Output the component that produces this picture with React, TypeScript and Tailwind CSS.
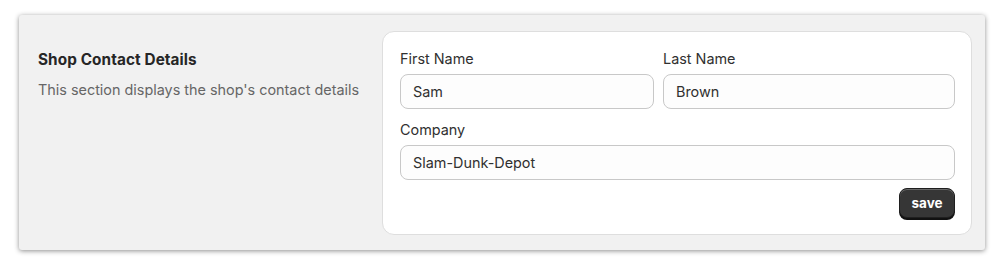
import { useState } from "react";

export default function App() {
  const [firstName, setFirstName] = useState("Sam");
  const [lastName, setLastName] = useState("Brown");
  const [company, setCompany] = useState("Slam-Dunk-Depot");

  return (
    <div className="w-[1000px] h-[266px] bg-white pt-[15px] pl-[19px] font-['Inter',sans-serif]">
      <section className="w-[966px] h-[235px] bg-[#f1f1f1] rounded-[3px] shadow-[0_1px_5px_rgba(0,0,0,0.45)] flex pt-[16px] pr-[13px] pb-[15px]">
        {/* left: section description */}
        <div className="w-[363px] shrink-0 pl-[19px] pt-[19px]">
          <h2 className="text-[15.3px] leading-[20px] font-bold tracking-[0.1px] text-[#262626]">
            Shop Contact Details
          </h2>
          <p className="mt-[10px] text-[14.4px] leading-[20px] text-[#666666]">
            This section displays the shop's contact details
          </p>
        </div>

        {/* right: form card */}
        <div className="flex-1 bg-white rounded-[12px] border border-[#dedede] pl-[17px] pr-[16px] pt-[18px]">
          <div className="flex gap-[9px]">
            <Field label="First Name" value={firstName} onChange={setFirstName} className="w-[254px] shrink-0" />
            <Field label="Last Name" value={lastName} onChange={setLastName} className="flex-1" />
          </div>
          <div className="mt-[12px] flex">
            <Field label="Company" value={company} onChange={setCompany} className="flex-1" />
          </div>
          <div className="flex justify-end mt-[8px]">
            <button className="h-[30px] w-[56px] rounded-[8px] bg-[#363636] border border-[#1f1f1f] shadow-[inset_0_1px_0_rgba(255,255,255,0.25),0_2px_0_#111] text-white text-[13.5px] font-bold">
              save
            </button>
          </div>
        </div>
      </section>
    </div>
  );
}

function Field({
  label,
  value,
  onChange,
  className,
}: {
  label: string;
  value: string;
  onChange: (v: string) => void;
  className?: string;
}) {
  return (
    <label className={`flex flex-col ${className ?? ""}`}>
      <span className="text-[14.4px] leading-[18px] text-[#303030]">{label}</span>
      <input
        value={value}
        onChange={e => onChange(e.target.value)}
        className="mt-[6px] h-[35px] rounded-[8px] border border-[#c8c8c8] bg-[#fdfdfd] px-[12px] text-[14.4px] text-[#303030] outline-none"
      />
    </label>
  );
}
